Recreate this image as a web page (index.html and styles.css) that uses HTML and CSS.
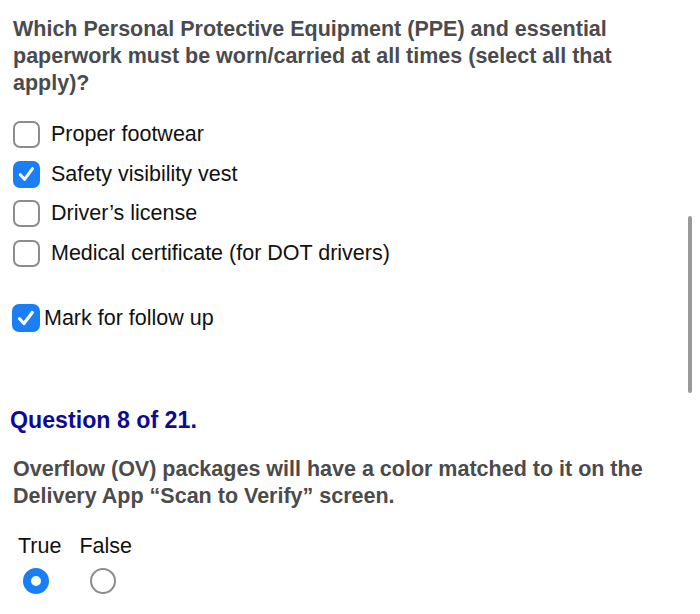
FILE: index.html
```html
<!DOCTYPE html>
<html>
<head>
<meta charset="utf-8">
<link rel="stylesheet" href="styles.css">
</head>
<body>
<div class="page">
  <h2 class="prompt">Which Personal Protective Equipment (PPE) and essential paperwork must be worn/carried at all times (select all that apply)?</h2>
  <ul class="options">
    <li class="option"><span class="box"></span><span class="label">Proper footwear</span></li>
    <li class="option"><span class="box checked"><svg viewBox="0 0 26 26"><path d="M6 13.8 L10.8 19 L19.8 7" /></svg></span><span class="label">Safety visibility vest</span></li>
    <li class="option"><span class="box"></span><span class="label">Driver’s license</span></li>
    <li class="option"><span class="box"></span><span class="label">Medical certificate (for DOT drivers)</span></li>
  </ul>
  <div class="follow"><span class="box checked big"><svg viewBox="0 0 26 26"><path d="M6 13.8 L10.8 19 L19.8 7" /></svg></span><span class="label">Mark for follow up</span></div>

  <h3 class="qnum">Question 8 of 21.</h3>
  <p class="prompt q2">Overflow (OV) packages will have a color matched to it on the Delivery App “Scan to Verify” screen.</p>
  <div class="tf">
    <div class="tf-col"><span class="tf-label">True</span><span class="radio on"></span></div>
    <div class="tf-col"><span class="tf-label">False</span><span class="radio"></span></div>
  </div>
</div>
<div class="scrollbar"></div>
</body>
</html>
```
FILE: styles.css
```css
html, body {
  margin: 0;
  padding: 0;
  background: #ffffff;
}
body {
  font-family: "Liberation Sans", Arial, sans-serif;
  width: 700px;
  height: 614px;
  overflow: hidden;
  position: relative;
}
.page {
  padding: 16px 0 0 13px;
}
.prompt {
  margin: 0;
  font-size: 21.5px;
  font-weight: bold;
  line-height: 27px;
  color: #4b4b4d;
  width: 660px;
}
.options {
  list-style: none;
  margin: 18px 0 0 0;
  padding: 0;
  display: flex;
  flex-direction: column;
}
.option {
  display: flex;
  align-items: center;
  height: 39.6px;
  gap: 11px;
}
.label {
  font-size: 21.5px;
  color: #111111;
}
.box {
  width: 23px;
  height: 23px;
  border: 2.5px solid #8c8c8c;
  border-radius: 7px;
  box-sizing: content-box;
  display: inline-flex;
  align-items: center;
  justify-content: center;
  flex: none;
}
.box.checked {
  background: #1a7ef5;
  border-color: #1a7ef5;
}
.box svg {
  width: 26px;
  height: 26px;
}
.box svg path {
  fill: none;
  stroke: #ffffff;
  stroke-width: 3.4;
  stroke-linecap: round;
  stroke-linejoin: round;
}
.follow {
  display: flex;
  align-items: center;
  gap: 4px;
  margin-top: 31px;
  margin-left: -1px;
}
.box.big {
  width: 24px;
  height: 24px;
}
.qnum {
  margin: 75px 0 0 -3px;
  font-size: 23.2px;
  font-weight: bold;
  line-height: 27px;
  color: #0c0b93;
}
.q2 {
  margin-top: 22px;
}
.tf {
  display: flex;
  gap: 18px;
  margin: 24px 0 0 5px;
}
.tf-col {
  display: flex;
  flex-direction: column;
  align-items: center;
  gap: 10px;
}
.tf-label {
  font-size: 21.5px;
  color: #111111;
  line-height: 24px;
}
.radio {
  width: 22px;
  height: 22px;
  border-radius: 50%;
  border: 2.5px solid #8c8c8c;
  box-sizing: content-box;
  margin-right: 5px;
}
.radio.on {
  width: 10px;
  height: 10px;
  border: 8.5px solid #1a7ef5;
  margin-right: 8px;
}
.scrollbar {
  position: absolute;
  left: 688px;
  top: 216px;
  width: 4px;
  height: 177px;
  border-radius: 2px;
  background: #9a9a9a;
}
```
